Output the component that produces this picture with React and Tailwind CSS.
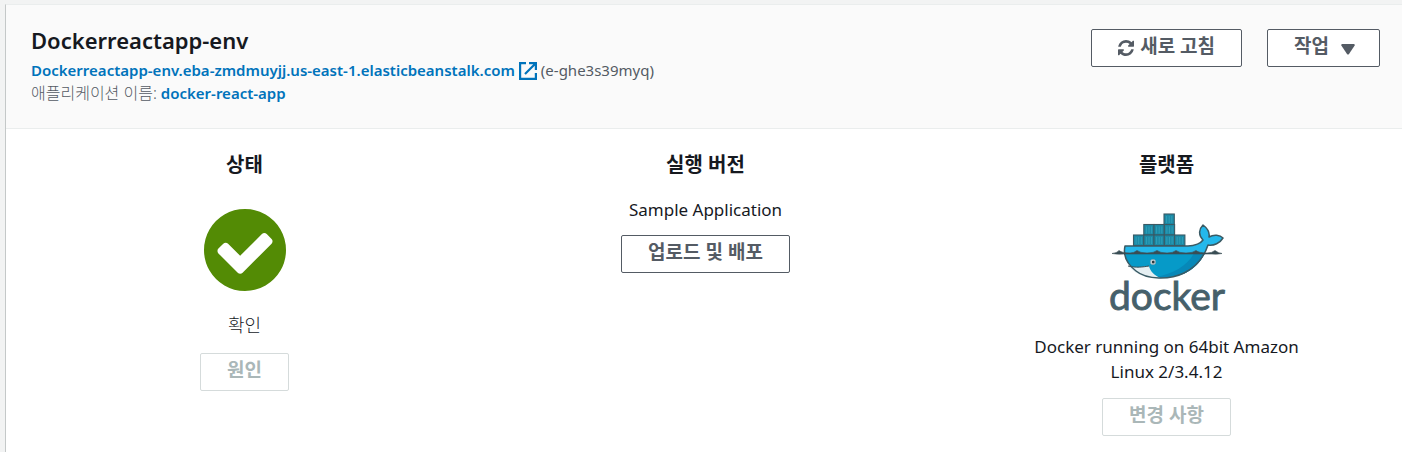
import React from "react";

const buttonBase =
  "flex h-[38px] items-center rounded-xs border bg-white px-[26px] pb-1 text-[19px] leading-6 font-bold whitespace-nowrap";

function Button({ children, disabled = false }) {
  return (
    <button
      type="button"
      disabled={disabled}
      className={`${buttonBase} ${
        disabled ? "border-[#d5dbdb] text-[#aab7b8]" : "border-[#545b64] text-[#545b64]"
      }`}
    >
      {children}
    </button>
  );
}

function RefreshIcon() {
  return (
    <svg viewBox="0 0 1536 1536" className="mt-1 mr-1.5 size-4" fill="currentColor" aria-hidden="true">
      <path d="M1511 928q0 5-1 7-64 268-268 434.5t-478 166.5q-146 0-282.5-55t-243.5-157l-129 129q-19 19-45 19t-45-19-19-45v-448q0-26 19-45t45-19h448q26 0 45 19t19 45-19 45l-137 137q71 66 161 102t187 36q134 0 250-65t186-179q11-17 53-117 8-23 30-23h192q13 0 22.5 9.5t9.5 22.5zm25-800v448q0 26-19 45t-45 19h-448q-26 0-45-19t-19-45 19-45l138-138q-148-137-349-137-134 0-250 65t-186 179q-11 17-53 117-8 23-30 23h-199q-13 0-22.5-9.5t-9.5-22.5v-7q65-268 270-434.5t480-166.5q146 0 284 55.5t245 156.5l130-129q19-19 45-19t45 19 19 45z" />
    </svg>
  );
}

function CheckCircle() {
  return (
    <svg viewBox="0 0 1536 1536" className="mt-[30px] size-[82px] text-[#538b05]" fill="currentColor" aria-hidden="true">
      <path d="M1284 606q0-28-18-46l-91-90q-19-19-45-19t-45 19l-408 407-226-226q-19-19-45-19t-45 19l-91 90q-18 18-18 46 0 27 18 45l362 362q19 19 45 19 27 0 46-19l543-543q18-18 18-45zm252 162q0 209-103 385.5t-279.5 279.5-385.5 103-385.500-103-279.5-279.5-103-385.5 103-385.5 279.5-279.5 385.5-103 385.5 103 279.5 279.5 103 385.5z" />
    </svg>
  );
}

function ExternalIcon() {
  return (
    <svg viewBox="0 0 18 18" className="size-[18px]" fill="none" stroke="currentColor" strokeWidth="2.2" aria-hidden="true">
      <path d="M7 1.1H1.1V16.900H16.900V11M10 1.1H16.900V8M16 2L6 12" />
    </svg>
  );
}

const crates = [
  [64, 13],
  [43.8, 23.5], [54, 23.5], [64.3, 23.5],
  [33.5, 34], [43.8, 34], [54, 34], [64.3, 34], [74.6, 34],
];

const whale =
  "M25 45H88C95 45 101 42 103 39C98 34 99 28 103 24C107 27 110 31 109 36C114 33 120 34 123 37C120 42 114 45 108 44C104 56 96 66 84 72C70 79 47 79 36 70C27 63 23 54 25 45Z";

function DockerLogo() {
  return (
    <svg viewBox="0 0 134 120" className="h-[120px] w-[134px]" role="img" aria-label="docker">
      <g stroke="#3a5a64" strokeWidth="1.1">
        {crates.map(([x, y]) => (
          <g key={`${x}-${y}`}>
            <rect x={x} y={y} width="10.3" height="10.6" fill="#1b8aa6" />
            <path d={`M${x + 2.6} ${y + 2}v7M${x + 5.2} ${y + 2}v7M${x + 7.8} ${y + 2}v7`} stroke="#35a3bd" strokeWidth="0.8" />
          </g>
        ))}
      </g>
      <path d={whale} fill="#24b8eb" />
      <path d="M25 52H105C100 62 93 69 83 73C69 78 46 78 36 70C29 65 26 59 25 52Z" fill="#069ac8" />
      <path d="M94 52H105C100 62 93 69 83 73C74 76 64 77 55 76C74 73 88 64 94 52Z" fill="#0788b8" />
      <path d="M28 65C36 67 43 66 49 65C50 70 54 74 60 77C46 78 35 73 28 65Z" fill="#e5eff2" />
      <path d="M28 65C36 67 43 66 49 65" fill="none" stroke="#394d54" strokeWidth="1" />
      <path d={whale} fill="none" stroke="#3a5a64" strokeWidth="1.5" strokeLinejoin="round" />
      <path
        d="M12 52.5Q17 52 19 49.5Q22 52 30 52Q34 52 37 49.5Q40 52 47 52Q54 52 57 49.5Q60 52 67 52Q73 52 76 49.5Q79 52 86 52Q93 52 96 49.5Q99 52 107 52Q112 52 115 49.5Q118 52 122 52.5Q117 53.5 112 53H24Q17 53.5 12 52.5Z"
        fill="#394d54"
        stroke="#394d54"
        strokeWidth="0.6"
      />
      <circle cx="53" cy="61" r="2.7" fill="#dfe9ec" stroke="#6d97a3" strokeWidth="0.6" />
      <circle cx="53.2" cy="61" r="1.5" fill="#2b3a40" />
      <text
        x="67"
        y="109"
        textAnchor="middle"
        fontFamily="Lato, sans-serif"
        fontSize="39"
        fill="#46606a"
        stroke="#46606a"
        strokeWidth="0.9"
      >
        docker
      </text>
    </svg>
  );
}

function Column({ title, children }) {
  return (
    <section className="flex flex-col items-center px-20 text-center">
      <h2 className="text-[20px] leading-7 font-bold">{title}</h2>
      {children}
    </section>
  );
}

export default function App() {
  return (
    <div className="min-h-screen bg-[#f2f3f3] pt-1 pl-[5px] font-['Noto_Sans','Noto_Sans_CJK_KR',sans-serif] text-[#16191f]">
      <main className="min-h-[calc(100vh-4px)] border-t border-l border-t-[#eaeded] border-l-[#c4c8c8] bg-white">
        <header className="flex items-start justify-between border-b border-[#eaeded] bg-[#fafafa] pt-6 pr-[22px] pb-[23px] pl-[25px]">
          <div className="text-[15px] leading-[23px] text-[#545b64]">
            <h1 className="mb-2 text-[22px] leading-[22px] font-semibold text-[#16191f]">Dockerreactapp-env</h1>
            <p className="flex items-center gap-1">
              <a href="#environment" className="flex items-center gap-1 font-semibold text-[#0073bb]">
                Dockerreactapp-env.eba-zmdmuyjj.us-east-1.elasticbeanstalk.com
                <ExternalIcon />
              </a>
              <span>(e-ghe3s39myq)</span>
            </p>
            <p className="flex items-center gap-1">
              <span className="text-[16px] font-light">애플리케이션 이름:</span>
              <a href="#application" className="font-semibold text-[#0073bb]">docker-react-app</a>
            </p>
          </div>
          <div className="flex gap-[25px]">
            <Button>
              <RefreshIcon />
              새로 고침
            </Button>
            <Button>
              작업
              <svg viewBox="0 0 12 11" className="mt-1.5 ml-3 h-[11px] w-3 overflow-visible" fill="currentColor" aria-hidden="true">
                <path d="M1 0H13L14 1L8 10Q7 11 6 10L0 1Z" />
              </svg>
            </Button>
          </div>
        </header>
        <div className="grid grid-cols-3 pt-[22px] pr-[5px] pb-4 pl-2 text-[17px] leading-[25px]">
          <Column title="상태">
            <CheckCircle />
            <p className="mt-[22px] mb-[15px] text-[18px] font-light">확인</p>
            <Button disabled>원인</Button>
          </Column>
          <Column title="실행 버전">
            <p className="mt-[18px] mb-[13px]">Sample Application</p>
            <Button>업로드 및 배포</Button>
          </Column>
          <Column title="플랫폼">
            <div className="mt-[22px] mb-[13px]">
              <DockerLogo />
            </div>
            <p className="mb-[14px] max-w-[280px]">Docker running on 64bit Amazon Linux 2/3.4.12</p>
            <Button disabled>변경 사항</Button>
          </Column>
        </div>
      </main>
    </div>
  );
}
